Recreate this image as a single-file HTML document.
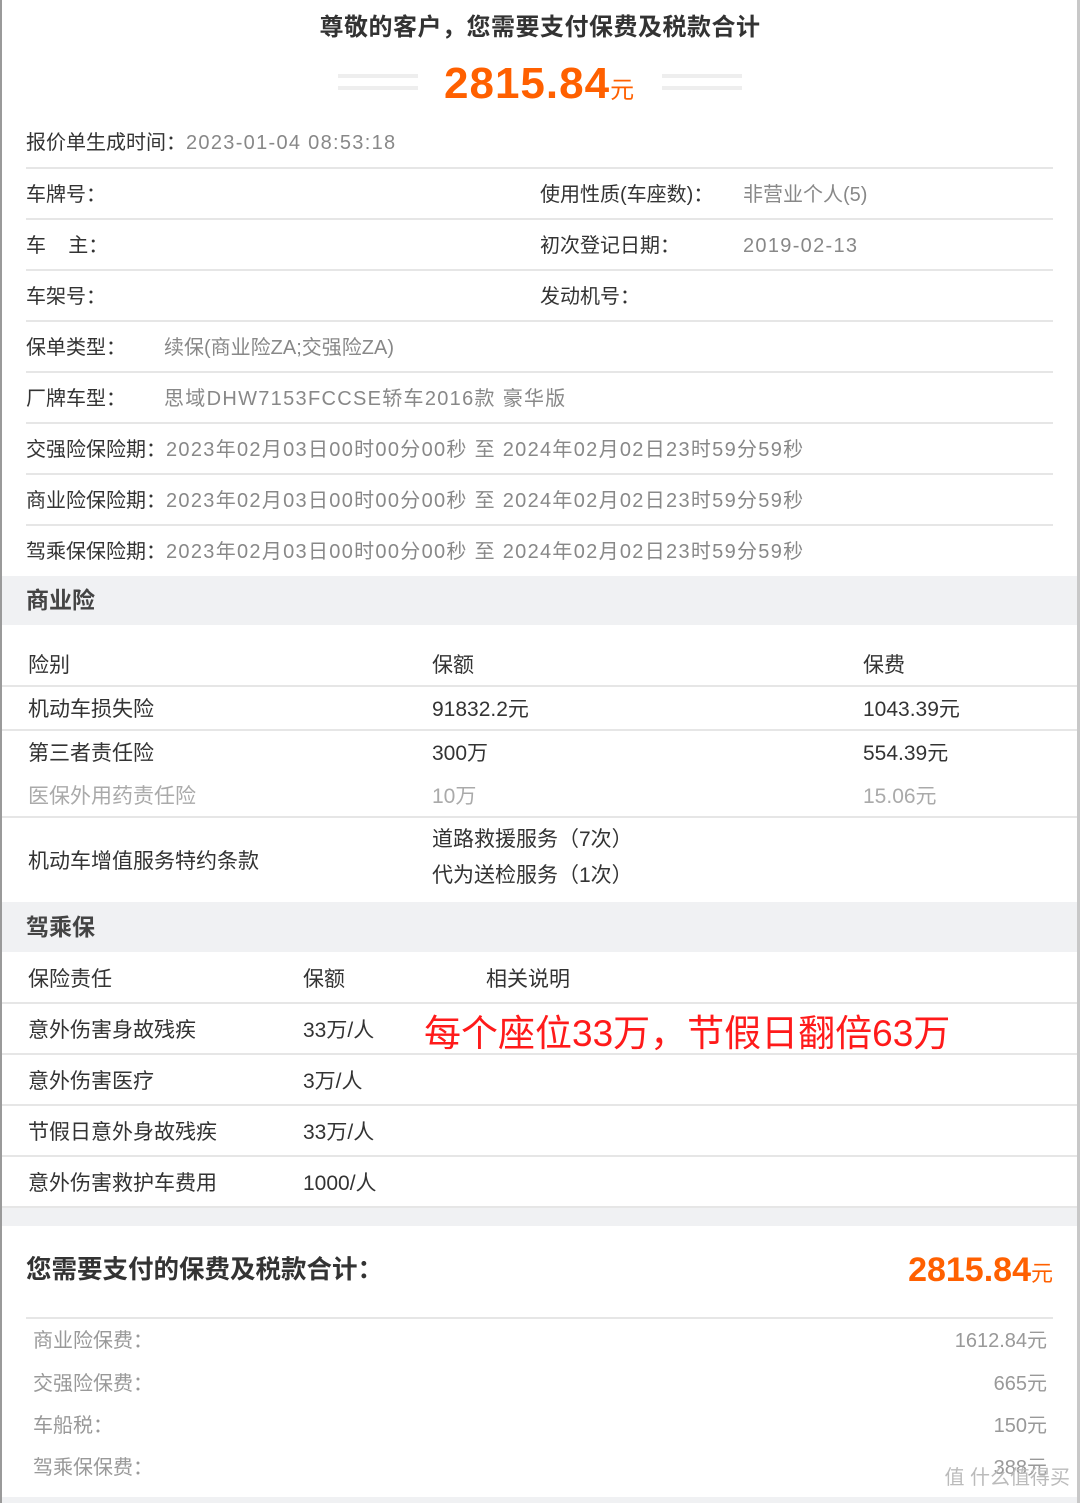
<!DOCTYPE html>
<html><head><meta charset="utf-8"><style>
*{margin:0;padding:0;box-sizing:border-box}
body{width:1080px;height:1503px;position:relative;background:#fff;font-family:"Liberation Sans","Noto Sans CJK SC",sans-serif;color:#333;overflow:hidden}
.a{position:absolute;white-space:nowrap;line-height:1}
.l{position:absolute;height:2px;background:#e6e6e6}
.band{position:absolute;left:2px;right:3px;background:#f0f1f3}
.g{color:#888}
.f20{font-size:20px}
.f21{font-size:21px}
.o{color:#ff6000;font-weight:bold}
.ls{letter-spacing:1.3px}
</style></head><body>
<div style="position:absolute;left:0;top:0;width:2px;height:1503px;background:#9a9a9a"></div>
<div style="position:absolute;right:0;top:0;width:3px;height:1503px;background:#c8c8c8"></div>

<div class="a" style="left:0;width:1080px;text-align:center;top:16px;font-size:24px;font-weight:bold;color:#333;letter-spacing:0.5px">尊敬的客户，您需要支付保费及税款合计</div>
<div style="position:absolute;left:338px;top:74px;width:80px;height:4px;background:#eee"></div>
<div style="position:absolute;left:338px;top:86px;width:80px;height:4px;background:#eee"></div>
<div style="position:absolute;left:662px;top:74px;width:80px;height:4px;background:#eee"></div>
<div style="position:absolute;left:662px;top:86px;width:80px;height:4px;background:#eee"></div>
<div class="a o" style="left:444px;top:62px;font-size:44px;letter-spacing:1px">2815.84<span style="font-size:24px;font-weight:normal">元</span></div>

<div class="a f20" style="left:26px;top:133px">报价单生成时间：<span class="g ls">2023-01-04 08:53:18</span></div>
<div class="l" style="left:26px;width:1027px;top:167px"></div>
<div class="a f20" style="left:26px;top:185px">车牌号：</div>
<div class="a f20" style="left:540px;top:185px">使用性质(车座数)：</div>
<div class="a f20 g" style="left:743px;top:185px">非营业个人(5)</div>
<div class="l" style="left:26px;width:1027px;top:218px"></div>
<div class="a f20" style="left:26px;top:236px">车&nbsp;&nbsp;&nbsp;&nbsp;主：</div>
<div class="a f20" style="left:540px;top:236px">初次登记日期：</div>
<div class="a f20 g ls" style="left:743px;top:236px">2019-02-13</div>
<div class="l" style="left:26px;width:1027px;top:269px"></div>
<div class="a f20" style="left:26px;top:287px">车架号：</div>
<div class="a f20" style="left:540px;top:287px">发动机号：</div>
<div class="l" style="left:26px;width:1027px;top:320px"></div>
<div class="a f20" style="left:26px;top:338px">保单类型：</div>
<div class="a f20 g" style="left:164px;top:338px">续保(商业险ZA;交强险ZA)</div>
<div class="l" style="left:26px;width:1027px;top:371px"></div>
<div class="a f20" style="left:26px;top:389px">厂牌车型：</div>
<div class="a f20 g ls" style="left:164px;top:389px">思域DHW7153FCCSE轿车2016款 豪华版</div>
<div class="l" style="left:26px;width:1027px;top:422px"></div>
<div class="a f20" style="left:26px;top:440px">交强险保险期：<span class="g ls">2023年02月03日00时00分00秒 至 2024年02月02日23时59分59秒</span></div>
<div class="l" style="left:26px;width:1027px;top:473px"></div>
<div class="a f20" style="left:26px;top:491px">商业险保险期：<span class="g ls">2023年02月03日00时00分00秒 至 2024年02月02日23时59分59秒</span></div>
<div class="l" style="left:26px;width:1027px;top:524px"></div>
<div class="a f20" style="left:26px;top:542px">驾乘保保险期：<span class="g ls">2023年02月03日00时00分00秒 至 2024年02月02日23时59分59秒</span></div>

<div class="band" style="top:576px;height:49px"></div>
<div class="a" style="left:26px;top:589px;font-size:23px;font-weight:bold;color:#444">商业险</div>

<div class="a f21" style="left:28px;top:655px">险别</div>
<div class="a f21" style="left:432px;top:655px">保额</div>
<div class="a f21" style="left:863px;top:655px">保费</div>
<div class="l" style="left:2px;right:3px;top:685px"></div>
<div class="a f21" style="left:28px;top:699px">机动车损失险</div>
<div class="a f21" style="left:432px;top:699px">91832.2元</div>
<div class="a f21" style="left:863px;top:699px">1043.39元</div>
<div class="l" style="left:2px;right:3px;top:729px"></div>
<div class="a f21" style="left:28px;top:743px">第三者责任险</div>
<div class="a f21" style="left:432px;top:743px">300万</div>
<div class="a f21" style="left:863px;top:743px">554.39元</div>
<div class="a f21" style="left:28px;top:786px;color:#aaa">医保外用药责任险</div>
<div class="a f21" style="left:432px;top:786px;color:#aaa">10万</div>
<div class="a f21" style="left:863px;top:786px;color:#aaa">15.06元</div>
<div class="l" style="left:2px;right:3px;top:816px"></div>
<div class="a f21" style="left:432px;top:829px">道路救援服务（7次）</div>
<div class="a f21" style="left:28px;top:851px">机动车增值服务特约条款</div>
<div class="a f21" style="left:432px;top:865px">代为送检服务（1次）</div>

<div class="band" style="top:902px;height:50px"></div>
<div class="a" style="left:26px;top:916px;font-size:23px;font-weight:bold;color:#444">驾乘保</div>

<div class="a f21" style="left:28px;top:969px">保险责任</div>
<div class="a f21" style="left:303px;top:969px">保额</div>
<div class="a f21" style="left:486px;top:969px">相关说明</div>
<div class="l" style="left:2px;right:3px;top:1002px"></div>
<div class="a f21" style="left:28px;top:1020px">意外伤害身故残疾</div>
<div class="a f21" style="left:303px;top:1020px">33万/人</div>
<div class="a" style="left:424px;top:1015px;font-size:37px;color:#ff1a1a">每个座位33万，节假日翻倍63万</div>
<div class="l" style="left:2px;right:3px;top:1053px"></div>
<div class="a f21" style="left:28px;top:1071px">意外伤害医疗</div>
<div class="a f21" style="left:303px;top:1071px">3万/人</div>
<div class="l" style="left:2px;right:3px;top:1104px"></div>
<div class="a f21" style="left:28px;top:1122px">节假日意外身故残疾</div>
<div class="a f21" style="left:303px;top:1122px">33万/人</div>
<div class="l" style="left:2px;right:3px;top:1155px"></div>
<div class="a f21" style="left:28px;top:1173px">意外伤害救护车费用</div>
<div class="a f21" style="left:303px;top:1173px">1000/人</div>
<div class="l" style="left:2px;right:3px;top:1206px"></div>
<div class="band" style="top:1208px;height:18px"></div>

<div class="a" style="left:26px;top:1258px;font-size:25.5px;font-weight:bold;color:#333">您需要支付的保费及税款合计：</div>
<div class="a o" style="right:27px;top:1253px;font-size:34px">2815.84<span style="font-size:22px;font-weight:normal">元</span></div>
<div class="l" style="left:26px;width:1027px;top:1317px"></div>
<div class="a f20" style="left:33px;top:1331px;color:#999">商业险保费：</div>
<div class="a f20" style="right:33px;top:1331px;color:#999">1612.84元</div>
<div class="a f20" style="left:33px;top:1374px;color:#999">交强险保费：</div>
<div class="a f20" style="right:33px;top:1374px;color:#999">665元</div>
<div class="a f20" style="left:33px;top:1416px;color:#999">车船税：</div>
<div class="a f20" style="right:33px;top:1416px;color:#999">150元</div>
<div class="a f20" style="left:33px;top:1458px;color:#999">驾乘保保费：</div>
<div class="a f20" style="right:33px;top:1458px;color:#999">388元</div>
<div class="a" style="right:10px;top:1468px;font-size:20px;color:#bbb">值 什么值得买</div>
<div class="band" style="top:1497px;height:6px"></div>
</body></html>
